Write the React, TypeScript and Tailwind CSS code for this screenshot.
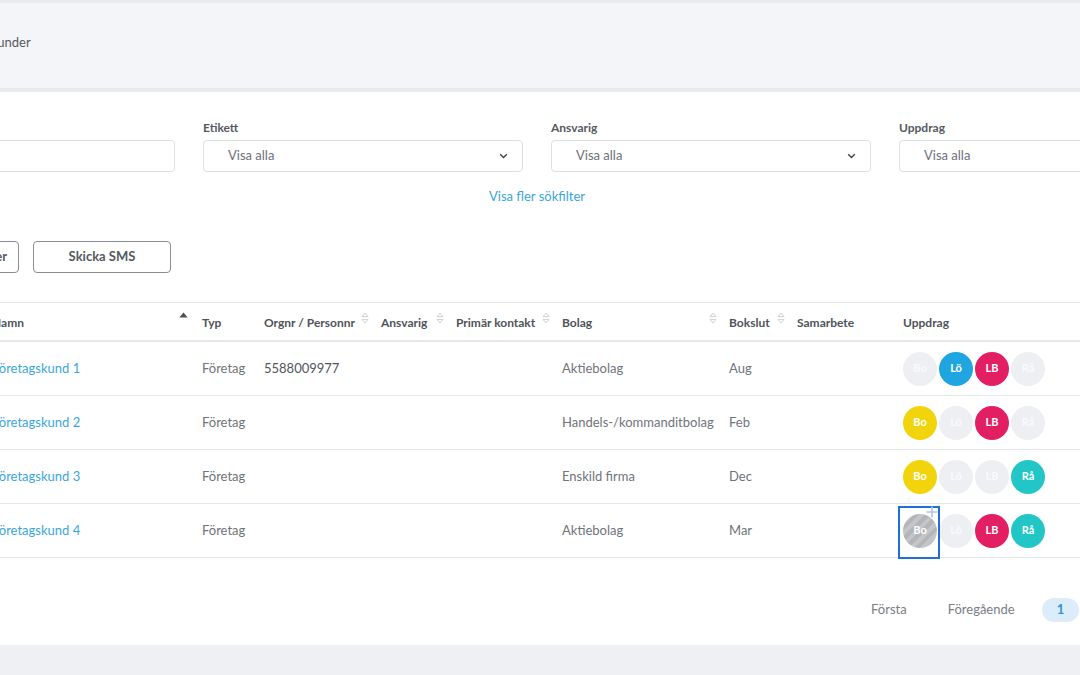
import React from "react";

const font = { fontFamily: "Lato, 'Open Sans', Arial, sans-serif" };

type Badge = { label: string; color: string | null };

const rows: { name: string; typ: string; orgnr: string; bolag: string; bokslut: string; badges: Badge[] }[] = [
  {
    name: "Företagskund 1",
    typ: "Företag",
    orgnr: "5588009977",
    bolag: "Aktiebolag",
    bokslut: "Aug",
    badges: [
      { label: "Bo", color: null },
      { label: "Lö", color: "bg-[#1fa6e0]" },
      { label: "LB", color: "bg-[#e21f63]" },
      { label: "Rå", color: null },
    ],
  },
  {
    name: "Företagskund 2",
    typ: "Företag",
    orgnr: "",
    bolag: "Handels-/kommanditbolag",
    bokslut: "Feb",
    badges: [
      { label: "Bo", color: "bg-[#f2d40c]" },
      { label: "Lö", color: null },
      { label: "LB", color: "bg-[#e21f63]" },
      { label: "Rå", color: null },
    ],
  },
  {
    name: "Företagskund 3",
    typ: "Företag",
    orgnr: "",
    bolag: "Enskild firma",
    bokslut: "Dec",
    badges: [
      { label: "Bo", color: "bg-[#f2d40c]" },
      { label: "Lö", color: null },
      { label: "LB", color: null },
      { label: "Rå", color: "bg-[#22c6c6]" },
    ],
  },
  {
    name: "Företagskund 4",
    typ: "Företag",
    orgnr: "",
    bolag: "Aktiebolag",
    bokslut: "Mar",
    badges: [
      { label: "Bo", color: "hover" },
      { label: "Lö", color: null },
      { label: "LB", color: "bg-[#e21f63]" },
      { label: "Rå", color: "bg-[#22c6c6]" },
    ],
  },
];

const cols = "grid grid-cols-[129px_210px_62px_117px_75px_106px_167px_68px_106px_1fr]";

function SortBoth() {
  return (
    <svg width="8" height="12" viewBox="0 0 8 12" className="shrink-0">
      <path d="M4 1 L7 4.6 H1 Z" fill="none" stroke="#cdd0d5" strokeWidth="1" strokeLinejoin="round" />
      <path d="M1 7.4 H7 L4 11 Z" fill="none" stroke="#cdd0d5" strokeWidth="1" strokeLinejoin="round" />
    </svg>
  );
}

function SortUp() {
  return (
    <svg width="9" height="6" viewBox="0 0 9 6" className="shrink-0">
      <path d="M4.5 0.5 L8.3 5 Q8.5 5.5 8 5.5 H1 Q0.5 5.5 0.7 5 Z" fill="#4d5157" />
    </svg>
  );
}

function Head({ label, sort }: { label: string; sort?: "both" | "up" }) {
  return (
    <div className="relative flex items-center pl-2 pt-[3px] text-[12px] font-bold text-[#4f535a]">
      {label}
      {sort && (
        <span className={sort === "up" ? "absolute right-[6px] top-[9px]" : "absolute right-[4px] top-[9px]"}>
          {sort === "up" ? <SortUp /> : <SortBoth />}
        </span>
      )}
    </div>
  );
}

function Circle({ b }: { b: Badge }) {
  if (b.color === "hover") {
    return (
      <div className="relative">
        <div className="w-[34px] h-[34px] rounded-full grid place-content-center text-[11px] font-bold text-white bg-[repeating-linear-gradient(135deg,#b3b5b8_0px,#b3b5b8_4px,#c3c5c8_4px,#c3c5c8_8px)]">
          {b.label}
        </div>
        <div className="absolute left-[-5px] right-[-3px] top-[-8px] bottom-[-11px] border-2 border-[#1f6fd6]" />
        <svg width="12" height="12" viewBox="0 0 12 12" className="absolute right-[-1px] top-[-8px]">
          <path d="M6 0.5 V11.5 M0.5 6 H11.5" stroke="#a9c8e7" strokeWidth="1.6" />
        </svg>
      </div>
    );
  }
  if (!b.color) {
    return (
      <div className="w-[34px] h-[34px] rounded-full grid place-content-center text-[11px] font-bold text-[#fafafb] bg-[#eeeff2]">
        {b.label}
      </div>
    );
  }
  return (
    <div className={`w-[34px] h-[34px] rounded-full grid place-content-center text-[11px] font-bold text-white ${b.color}`}>
      {b.label}
    </div>
  );
}

function Select({ label, chevron = true }: { label: string; chevron?: boolean }) {
  return (
    <div>
      <div className="text-[12px] leading-4 font-bold text-[#55595f] mb-1">{label}</div>
      <div className="h-[32px] border border-[#dcdfe4] rounded-[4px] flex items-center justify-between pl-6 pr-[14px] text-[13px] text-[#6d7178]">
        <span>{chevron ? "Visa alla" : ""}</span>
        {chevron && (
          <svg width="9" height="6" viewBox="0 0 9 6">
            <path d="M1.2 1.2 L4.5 4.4 L7.8 1.2" fill="none" stroke="#3d4046" strokeWidth="1.4" />
          </svg>
        )}
      </div>
    </div>
  );
}

export default function App() {
  return (
    <div className="w-[1080px] h-[675px] overflow-hidden bg-[#eff0f3]" style={font}>
      <div className="ml-[-175px] w-[1424px]">
        <div className="h-[88px] bg-[#f4f5f8] border-t-[3px] border-[#eaebef] shadow-[0_3px_5px_rgba(0,0,0,0.04)] pt-[31px] pl-[164px] text-[13px] leading-4 text-[#55595f]">
          Kunder
        </div>

        <div className="mt-[4px] bg-white px-[30px] pt-[28px] pb-[23px]">
          <div className="grid grid-cols-4 gap-x-[28px]">
            <Select label="Sök" chevron={false} />
            <Select label="Etikett" />
            <Select label="Ansvarig" />
            <Select label="Uppdrag" />
          </div>

          <div className="mt-4 text-center text-[13px] leading-4 text-[#3aa6de]">Visa fler sökfilter</div>

          <div className="mt-[37px] flex gap-[14px]">
            <button className="h-[32px] w-[164px] border border-[#8a8e94] rounded-[4px] flex items-center justify-end pr-[11px] text-[13px] font-bold text-[#55595f]">
              Exportera kunder
            </button>
            <button className="h-[32px] w-[138px] border border-[#8a8e94] rounded-[4px] text-[13px] font-bold text-[#55595f]">
              Skicka SMS
            </button>
          </div>

          <div className="mt-[29px]">
            <div className={`${cols} h-[40px] border-t border-b-2 border-[#e6e7eb]`}>
              <div />
              <Head label="Namn" sort="up" />
              <Head label="Typ" />
              <Head label="Orgnr / Personnr" sort="both" />
              <Head label="Ansvarig" sort="both" />
              <Head label="Primär kontakt" sort="both" />
              <Head label="Bolag" sort="both" />
              <Head label="Bokslut" sort="both" />
              <Head label="Samarbete" />
              <Head label="Uppdrag" />
            </div>
            {rows.map((r) => (
              <div key={r.name} className={`${cols} h-[54px] border-b border-[#e6e7eb] text-[13px] text-[#6f737a]`}>
                <div />
                <div className="flex items-center pl-2 pt-[1px] text-[#3aa6de]">{r.name}</div>
                <div className="flex items-center pl-2 pt-[1px]">{r.typ}</div>
                <div className="flex items-center pl-2 pt-[1px] text-[#51555b]">{r.orgnr}</div>
                <div />
                <div />
                <div className="flex items-center pl-2 pt-[1px]">{r.bolag}</div>
                <div className="flex items-center pl-2 pt-[1px]">{r.bokslut}</div>
                <div />
                <div className="flex items-center pl-2 gap-[2px]">
                  {r.badges.map((b) => (
                    <Circle key={b.label} b={b} />
                  ))}
                </div>
              </div>
            ))}
          </div>

          <div className="mt-[40px] flex justify-end gap-[13px] text-[13px] text-[#7a7e85]">
            <span className="h-[24px] px-[14px] flex items-center">Första</span>
            <span className="h-[24px] px-[14px] flex items-center">Föregående</span>
            <span className="h-[24px] px-[15px] flex items-center rounded-full bg-[#dcedf9] text-[#2f94d6] font-bold">1</span>
            <span className="h-[24px] px-[13px] flex items-center">Nästa</span>
            <span className="h-[24px] px-[14px] flex items-center">Sista</span>
          </div>
        </div>
      </div>
    </div>
  );
}
